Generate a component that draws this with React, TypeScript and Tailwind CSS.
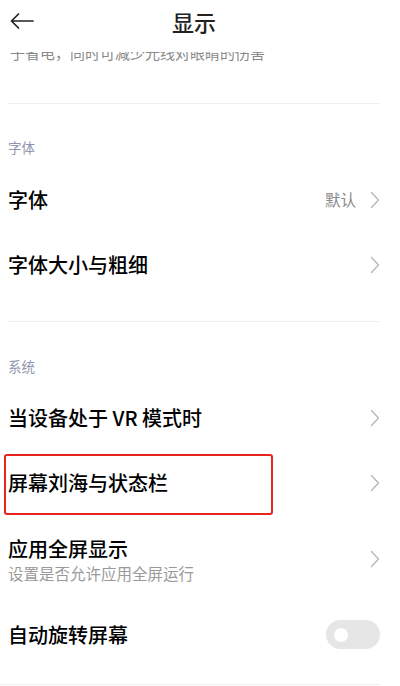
import type { ReactNode } from 'react';

function Chevron() {
  return (
    <svg width="10" height="18" viewBox="0 0 10 18" fill="none" className="shrink-0">
      <polyline points="1.5,1.5 8.5,9 1.5,16.5" stroke="#b8b8b8" strokeWidth="1.4" strokeLinecap="round" strokeLinejoin="round" />
    </svg>
  );
}

function SectionHeader({ label, top, bottom }: { label: string; top: string; bottom: string }) {
  return (
    <div className={`pl-[8px] text-[13.5px] leading-[18px] text-[#9096b0] ${top} ${bottom}`}>{label}</div>
  );
}

interface RowProps {
  title: string;
  value?: string;
  right?: ReactNode;
  children?: ReactNode;
}

function Row({ title, value, right, children }: RowProps) {
  return (
    <div className="relative flex h-[65px] items-center pl-[8px] pr-[20px]">
      <span className="flex-1 text-[20px] leading-[26px] font-medium text-black">{title}</span>
      {value && <span className="mr-[14px] text-[15.5px] text-[#8a8a8a]">{value}</span>}
      {right ?? <Chevron />}
      {children}
    </div>
  );
}

export default function App() {
  return (
    <div
      className="w-[400px] h-[686px] overflow-hidden bg-white"
      style={{ fontFamily: '"Noto Sans CJK SC", "Noto Sans", sans-serif' }}
    >
      <div className="flex h-[52px] items-start pt-[8px]">
        <svg width="24" height="16" viewBox="0 0 24 16" fill="none" className="ml-[10px] mt-[5px]">
          <path d="M23 8H1.5M8.5 1L1.5 8l7 7" stroke="#222" strokeWidth="1.7" strokeLinecap="round" strokeLinejoin="round" />
        </svg>
        <span className="ml-[138px] text-[22px] leading-[26px] font-medium text-[#222]">显示</span>
      </div>

      <div className="h-[52px] overflow-hidden border-b border-[#eeeeee] ml-[8px] mr-[20px]">
        <p className="-mt-[9px] pl-[2px] text-[15px] leading-[20px] text-[#8a8a8a] whitespace-nowrap">
          于省电，同时可减少光线对眼睛的伤害
        </p>
      </div>

      <SectionHeader label="字体" top="pt-[34px]" bottom="pb-[11px]" />
      <Row title="字体" value="默认" />
      <Row title="字体大小与粗细" />
      <div className="h-[25px] border-b border-[#eeeeee] ml-[8px] mr-[20px]" />

      <SectionHeader label="系统" top="pt-[35px]" bottom="pb-[10px]" />
      <Row title="当设备处于 VR 模式时" />
      <Row title="屏幕刘海与状态栏">
        <div className="absolute left-[4px] top-[4px] w-[269px] h-[61px] rounded-[3px] border-2 border-[#e8241f]" />
      </Row>

      <div className="flex h-[87px] items-center pl-[8px] pr-[20px]">
        <div className="flex-1 pt-[2px]">
          <div className="text-[20px] leading-[26px] font-medium text-black">应用全屏显示</div>
          <div className="text-[15.5px] leading-[22px] text-[#9a9a9a]">设置是否允许应用全屏运行</div>
        </div>
        <Chevron />
      </div>

      <Row
        title="自动旋转屏幕"
        right={
          <div className="flex h-[29px] w-[54px] items-center rounded-full bg-[#e6e6e6] pl-[8px]">
            <div className="h-[14px] w-[14px] rounded-full bg-white" />
          </div>
        }
      />
      <div className="h-[18px] border-b border-[#eeeeee] mr-[20px]" />
    </div>
  );
}
